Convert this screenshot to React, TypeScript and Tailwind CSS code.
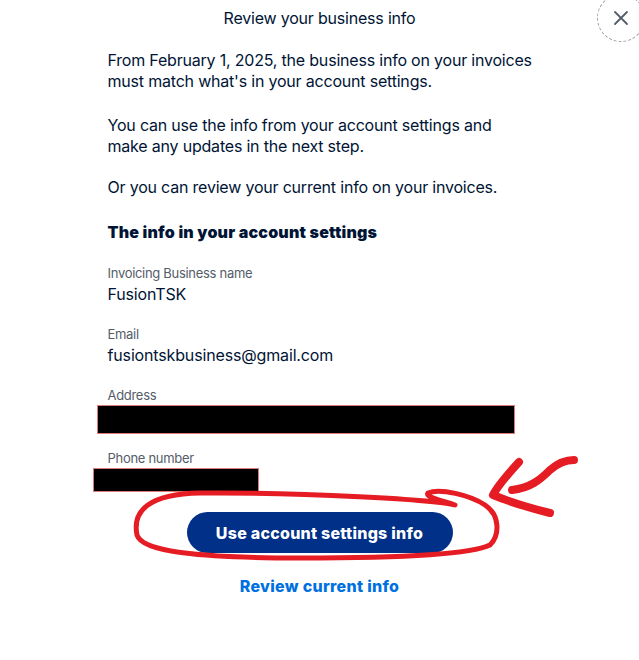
export default function App() {
  const font = { fontFamily: "Inter, 'Noto Sans', sans-serif" };
  const label = "text-[13px] leading-[18px] tracking-[-0.3px] text-[#545d68]";
  const value = "mt-[2px] text-[16px] leading-[21px] tracking-[-0.15px]";
  return (
    <div className="relative h-[660px] w-[639px] overflow-hidden bg-white text-[#001435]" style={font}>
      {/* close button */}
      <button className="absolute left-[597px] top-[-6px] flex h-[48px] w-[48px] items-center justify-center rounded-full border border-dashed border-[#9aa0a6] text-[#545d68]">
        <svg width="16" height="16" viewBox="0 0 16 16" fill="none" stroke="currentColor" strokeWidth="1.8" strokeLinecap="round">
          <path d="M2 2l12 12M14 2L2 14" />
        </svg>
      </button>

      <div className="mx-auto flex w-[424px] flex-col">
        <h1 className="mt-[6px] text-center text-[16px] leading-[24px] tracking-[-0.2px]">Review your business info</h1>

        <div className="whitespace-nowrap tracking-[-0.2px]">
          <p className="mt-[20px] text-[16px] leading-[21px]">
            From February 1, 2025, the business info on your invoices
            <br />
            must match what's in your account settings.
          </p>
          <p className="mt-[23px] text-[16px] leading-[21px]">
            You can use the info from your account settings and
            <br />
            make any updates in the next step.
          </p>
          <p className="mt-[20px] text-[16px] leading-[21px]">Or you can review your current info on your invoices.</p>
        </div>

        <h2 className="mt-[22px] text-[16px] font-black leading-[24px] tracking-[0.2px]">The info in your account settings</h2>

        <div className={`mt-[20px] ${label}`}>Invoicing Business name</div>
        <div className={value}>FusionTSK</div>

        <div className={`mt-[20px] ${label}`}>Email</div>
        <div className={value}>fusiontskbusiness@gmail.com</div>

        <div className={`mt-[20px] ${label}`}>Address</div>
        <div className="ml-[-11px] mt-[1px] h-[29px] w-[418px] border border-[#e07a7a] bg-black" />

        <div className={`mt-[15px] ${label}`}>Phone number</div>
        <div className="ml-[-15px] mt-[1px] h-[24px] w-[166px] border border-[#e07a7a] bg-black" />

        <button className="mx-auto mt-[20px] h-[41px] w-[266px] rounded-full bg-[#003087] text-[16px] font-extrabold tracking-[0.25px] text-white">
          Use account settings info
        </button>

        <a className="mx-auto mt-[21px] text-[16px] font-extrabold leading-[24px] tracking-[0.3px] text-[#0070e0]">Review current info</a>
      </div>

      {/* red annotation */}
      <svg className="pointer-events-none absolute left-0 top-0" width="639" height="660" fill="none" stroke="#e51c23" strokeLinecap="round" strokeLinejoin="round">
        <path
          strokeWidth="5"
          d="M455 505 C440 500 300 492 200 493 C150 494 132 510 137 535 C142 552 200 558 300 558 C400 558 470 555 490 545 C500 535 500 515 485 505 C470 495 440 488 428 493 C425 497 440 500 455 505"
        />
        <path strokeWidth="8" d="M512 490 C530 488 540 480 550 470 C558 463 565 460 574 460" />
        <path strokeWidth="8" d="M519 462 C508 474 498 485 493 495 C510 502 530 508 550 513" />
      </svg>
    </div>
  );
}
